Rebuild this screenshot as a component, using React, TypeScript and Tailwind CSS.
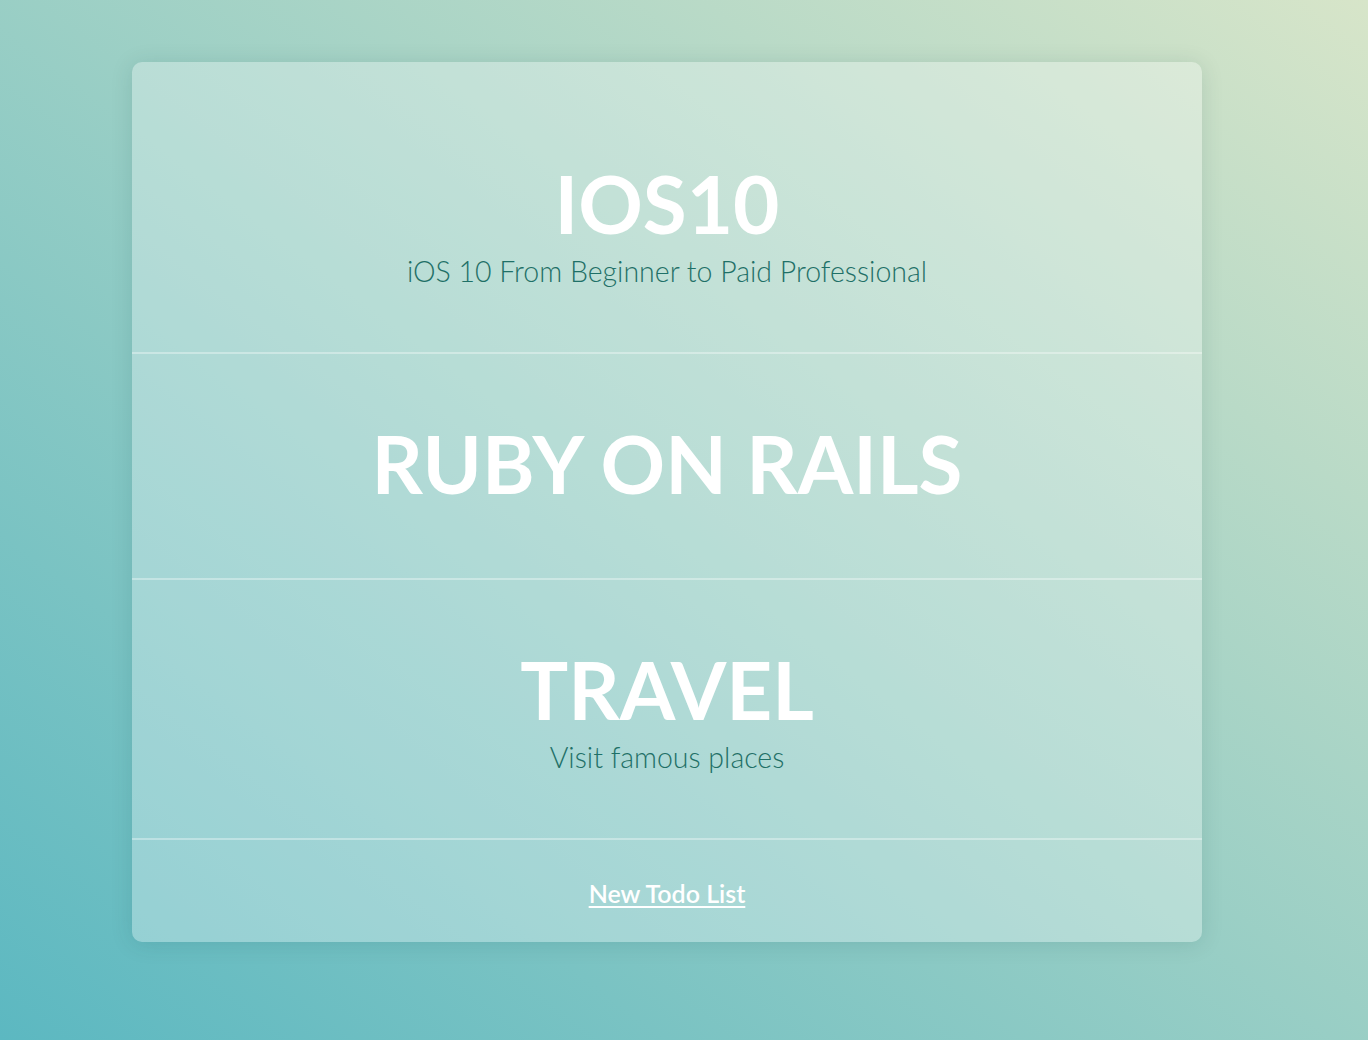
import React from "react";

const lists = [
  { title: "IOS10", description: "iOS 10 From Beginner to Paid Professional" },
  { title: "RUBY ON RAILS", description: "" },
  { title: "TRAVEL", description: "Visit famous places" },
];

export default function App() {
  return (
    <div
      className="min-h-screen w-full bg-[linear-gradient(to_top_right,#5cb8c1,#d7e5c9)] pt-[62px] pb-[98px]"
      style={{ fontFamily: "Lato, 'Open Sans', sans-serif" }}
    >
      <div className="ml-[132px] w-[1070px] rounded-[10px] bg-white/30 pt-[32px] shadow-[0_2px_22px_rgba(0,60,60,0.13)]">
        {lists.map((list) => (
          <div
            key={list.title}
            className={
              list.description
                ? "flex flex-col items-center border-b-2 border-white/35 pt-[61px] pb-[64px] text-center"
                : "flex flex-col items-center border-b-2 border-white/35 pt-[61px] pb-[67px] text-center"
            }
          >
            <h2 className="text-[80px] font-bold leading-[1.2] text-white">{list.title}</h2>
            {list.description && (
              <p className="mt-[3px] text-[28.5px] font-light leading-[1.2] text-[#1f7067]">{list.description}</p>
            )}
          </div>
        ))}

        {/* Footer link */}
        <div className="flex justify-center pt-[38px] pb-[34px]">
          <a href="#" className="text-[25px] font-semibold leading-[1.2] text-white underline underline-offset-[3px]">
            New Todo List
          </a>
        </div>
      </div>
    </div>
  );
}
